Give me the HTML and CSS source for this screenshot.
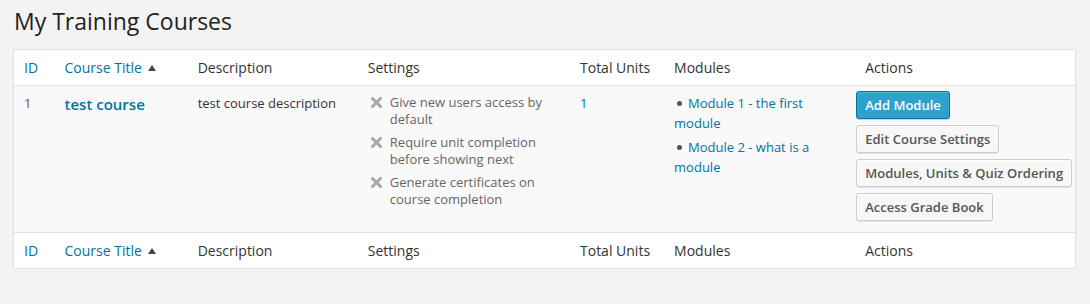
FILE: index.html
```html
<!DOCTYPE html>
<html lang="en">
<head>
    <meta charset="UTF-8">
    <title>My Training Courses</title>
    <link rel="stylesheet" href="styles.css">
</head>
<body>
    <div class="wrap">
        <h2>My Training Courses</h2>

        <table class="courses">
            <colgroup>
                <col class="col-id">
                <col class="col-title">
                <col class="col-desc">
                <col class="col-settings">
                <col class="col-units">
                <col class="col-modules">
                <col class="col-actions">
            </colgroup>
            <thead>
                <tr>
                    <th><a href="#">ID</a></th>
                    <th><a href="#">Course Title</a><span class="sort-up"></span></th>
                    <th>Description</th>
                    <th>Settings</th>
                    <th>Total Units</th>
                    <th>Modules</th>
                    <th>Actions</th>
                </tr>
            </thead>
            <tbody>
                <tr>
                    <td class="id">1</td>
                    <td><a href="#" class="row-title">test course</a></td>
                    <td class="desc">test course description</td>
                    <td>
                        <ul class="settings">
                            <li><svg class="cross" viewBox="0 0 12 12"><path d="M2.3 2.3 L9.7 9.7 M9.7 2.3 L2.3 9.7"/></svg><span>Give new users access by default</span></li>
                            <li><svg class="cross" viewBox="0 0 12 12"><path d="M2.3 2.3 L9.7 9.7 M9.7 2.3 L2.3 9.7"/></svg><span>Require unit completion before showing next</span></li>
                            <li><svg class="cross" viewBox="0 0 12 12"><path d="M2.3 2.3 L9.7 9.7 M9.7 2.3 L2.3 9.7"/></svg><span>Generate certificates on course completion</span></li>
                        </ul>
                    </td>
                    <td><a href="#">1</a></td>
                    <td>
                        <ul class="modules">
                            <li><a href="#">Module 1 - the first module</a></li>
                            <li><a href="#">Module 2 - what is a module</a></li>
                        </ul>
                    </td>
                    <td class="actions">
                        <a href="#" class="button primary">Add Module</a>
                        <a href="#" class="button">Edit Course Settings</a>
                        <a href="#" class="button">Modules, Units &amp; Quiz Ordering</a>
                        <a href="#" class="button">Access Grade Book</a>
                    </td>
                </tr>
            </tbody>
            <tfoot>
                <tr>
                    <th><a href="#">ID</a></th>
                    <th><a href="#">Course Title</a><span class="sort-up"></span></th>
                    <th>Description</th>
                    <th>Settings</th>
                    <th>Total Units</th>
                    <th>Modules</th>
                    <th>Actions</th>
                </tr>
            </tfoot>
        </table>
    </div>
</body>
</html>
```

FILE: styles.css
```css
body {
    margin: 0;
    background: #f3f3f3;
    font-family: 'Open Sans', sans-serif;
    font-size: 13px;
    color: #444;
}
a {
    color: #0074a2;
    text-decoration: none;
}
.wrap {
    padding: 0 14px 0 13px;
}
h2 {
    margin: 0;
    padding: 7px 0 13px 1px;
    font-size: 23px;
    font-weight: 400;
    line-height: 29px;
    color: #222;
}

/* table */
.courses {
    width: 1063px;
    table-layout: fixed;
    border-collapse: collapse;
    border: 1px solid #e1e1e1;
    box-shadow: 0 1px 1px rgba(0, 0, 0, 0.04);
}
.col-id { width: 41px; }
.col-title { width: 133px; }
.col-desc { width: 170px; }
.col-settings { width: 212px; }
.col-units { width: 94px; }
.col-modules { width: 191px; }
.col-actions { width: 220px; }

.courses th {
    background: #fff;
    text-align: left;
    font-weight: 400;
    font-size: 14px;
    color: #333;
    padding: 8px 10px;
    line-height: 19px;
    white-space: nowrap;
}
.courses thead th {
    border-bottom: 1px solid #e1e1e1;
}
.courses tfoot th {
    border-top: 1px solid #e1e1e1;
}
.sort-up {
    display: inline-block;
    width: 0;
    height: 0;
    margin: 0 0 3px 6px;
    border-left: 4px solid transparent;
    border-right: 4px solid transparent;
    border-bottom: 6px solid #444;
    vertical-align: middle;
}
.courses td {
    background: #f9f9f9;
    vertical-align: top;
    padding: 8px 10px;
    line-height: 18px;
}
.courses td.id {
    color: #555;
}
.courses td.desc {
    color: #333;
}
.row-title {
    font-size: 15px;
    font-weight: 600;
    line-height: 20px;
}

/* settings list */
.settings,
.modules {
    margin: 0;
    padding: 0;
    list-style: none;
}
.settings li {
    display: flex;
    gap: 7px;
    color: #666;
    line-height: 17px;
    margin-bottom: 6px;
}
.cross {
    flex: 0 0 13px;
    width: 13px;
    height: 13px;
    margin: 2px 0 0 2px;
    fill: none;
    stroke: #a8a8a8;
    stroke-width: 2.8;
    stroke-linecap: round;
}

/* modules list */
.modules li {
    line-height: 19.5px;
    margin: 0 0 5px;
}
.modules li::before {
    content: "";
    display: inline-block;
    width: 5px;
    height: 5px;
    margin: 0 6px 2px 3px;
    border-radius: 50%;
    background: #555;
    vertical-align: middle;
}

/* actions */
.courses td.actions {
    padding: 5px 0 5px 1px;
}
.button {
    display: block;
    width: fit-content;
    height: 28px;
    margin-bottom: 6px;
    padding: 0 8px 1px;
    line-height: 26px;
    box-sizing: border-box;
    font-size: 13px;
    font-weight: 600;
    color: #555;
    white-space: nowrap;
    background: #f7f7f7;
    border: 1px solid #ccc;
    border-radius: 3px;
    box-shadow: inset 0 1px 0 #fff, 0 1px 0 rgba(0, 0, 0, 0.08);
}
.button.primary {
    background: #2ea2cc;
    border-color: #0074a2;
    color: #fff;
    box-shadow: inset 0 1px 0 rgba(120, 200, 230, 0.5), 0 1px 0 rgba(0, 0, 0, 0.15);
}
```
